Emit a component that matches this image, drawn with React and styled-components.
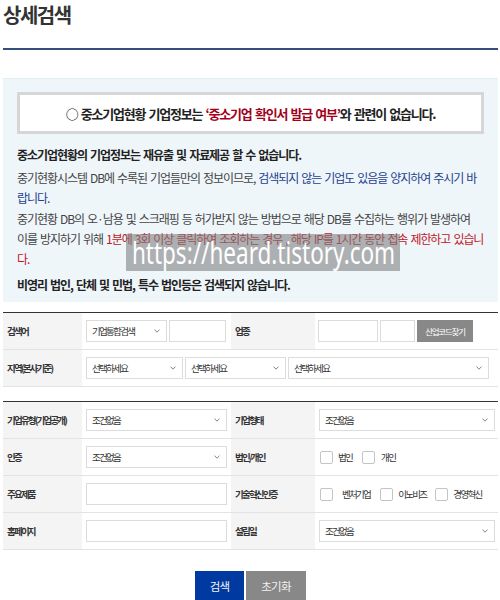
import React from "react"
import styled, { createGlobalStyle } from "styled-components"

const GlobalStyle = createGlobalStyle`
  html, body {
    margin: 0;
    padding: 0;
    background: #fff;
  }
  body {
    font-family: "Noto Sans CJK KR", "Noto Sans", sans-serif;
    color: #333;
  }
`

const Page = styled.div`
  width: 495px;
  margin-left: 3px;
`

const Title = styled.h2`
  margin: 0;
  height: 48px;
  font-size: 20px;
  font-weight: 700;
  letter-spacing: -1.5px;
  line-height: 30px;
  color: #333;
  border-bottom: 2px solid #34507a;
`

const InfoBox = styled.div`
  position: relative;
  margin-top: 28px;
  padding: 13px 14px 7px;
  background: #eff6fa;
  border-top: 1px solid #e3edf2;
`

const Notice = styled.div`
  height: 42px;
  box-sizing: border-box;
  border: 3px solid #d6d6d6;
  background: #fff;
  display: flex;
  align-items: center;
  justify-content: center;
  font-size: 13px;
  font-weight: 700;
  letter-spacing: -1.2px;
  word-spacing: 1.5px;
  color: #222;
`

const Red = styled.span`
  color: ${p => (p.dark ? "#a3001b" : "#c0161e")};
`

const Blue = styled.span`
  color: #24418f;
`

const Para = styled.p`
  margin: ${p => p.top}px 0 0;
  font-size: 12px;
  line-height: 20px;
  letter-spacing: -1.05px;
  word-spacing: 1.4px;
  white-space: nowrap;
  font-weight: ${p => (p.bold ? 700 : 400)};
  color: ${p => (p.bold ? "#222" : "#444")};
`

const Watermark = styled.div`
  position: absolute;
  left: 123px;
  top: 155px;
  width: 274px;
  height: 37px;
  background: rgba(125, 125, 125, 0.58);
  display: flex;
  align-items: center;
  justify-content: center;
  overflow: visible;
`

const WatermarkText = styled.span`
  font-family: "Noto Sans", sans-serif;
  font-size: 30px;
  color: #fff;
  white-space: nowrap;
  transform: scaleX(0.75);
`

const Grid = styled.div`
  display: grid;
  grid-template-columns: 79px 149px 84px 1fr;
  border-top: 1.5px solid #333;
  margin-top: ${p => p.gap}px;
`

const Label = styled.div`
  height: 37px;
  box-sizing: border-box;
  display: flex;
  align-items: center;
  padding-left: 4px;
  background: #f4f4f4;
  border-bottom: 1px solid #e2e2e8;
  font-size: 9.5px;
  font-weight: 700;
  letter-spacing: -1.8px;
  color: #333;
`

const Cell = styled.div`
  grid-column: span ${p => p.span || 1};
  height: 37px;
  box-sizing: border-box;
  display: flex;
  align-items: center;
  gap: ${p => p.gap ?? 2}px;
  padding-left: ${p => p.pad ?? 4}px;
  border-bottom: 1px solid #e2e2e8;
  font-size: 9.5px;
  letter-spacing: -1.7px;
  color: #333;
`

const SelectBox = styled.div`
  width: ${p => p.w}px;
  height: 22px;
  box-sizing: border-box;
  border: 1px solid #dcdcdc;
  background: #fff;
  display: flex;
  align-items: center;
  justify-content: space-between;
  padding: 0 6px 0 5px;
`

const Input = styled.div`
  width: ${p => p.w}px;
  height: 22px;
  box-sizing: border-box;
  border: 1px solid #dcdcdc;
  background: #fff;
`

const GrayButton = styled.div`
  width: 56px;
  height: 22px;
  background: #888;
  color: #fff;
  display: flex;
  align-items: center;
  justify-content: center;
  font-size: 8.5px;
  letter-spacing: -1.2px;
`

const Check = styled.span`
  width: 13px;
  height: 13px;
  box-sizing: border-box;
  border: 1px solid #c4c4c4;
  border-radius: 2px;
  background: #fff;
  margin-right: ${p => p.space}px;
`

const CheckText = styled.span`
  margin-right: ${p => p.space}px;
`

const Buttons = styled.div`
  display: flex;
  justify-content: center;
  gap: 2px;
  margin-top: 21px;
`

const Button = styled.div`
  width: ${p => p.w}px;
  height: 30px;
  background: ${p => (p.primary ? "#0039a0" : "#888")};
  color: #f2f2f2;
  display: flex;
  align-items: center;
  justify-content: center;
  font-size: 11.5px;
  letter-spacing: -0.8px;
`

const Chevron = () => (
  <svg width="6" height="4" viewBox="0 0 6 4">
    <polyline points="0.5,0.6 3,3.2 5.5,0.6" fill="none" stroke="#777" strokeWidth="0.9" />
  </svg>
)

const Select = ({ w, children }) => (
  <SelectBox w={w}>
    <span>{children}</span>
    <Chevron />
  </SelectBox>
)

const App = () => (
  <>
    <GlobalStyle />
    <Page>
      <Title>상세검색</Title>

      <InfoBox>
        <Notice>
          ○ 중소기업현황 기업정보는&nbsp;<Red dark>‘중소기업 확인서 발급 여부’</Red>와 관련이 없습니다.
        </Notice>
        <Para bold top={11}>중소기업현황의 기업정보는 재유출 및 자료제공 할 수 없습니다.</Para>
        <Para top={3}>
          중기현황시스템 DB에 수록된 기업들만의 정보이므로, <Blue>검색되지 않는 기업도 있음을 양지하여 주시기 바<br />랍니다.</Blue>
        </Para>
        <Para top={1}>
          중기현황 DB의 오·남용 및 스크래핑 등 허가받지 않는 방법으로 해당 DB를 수집하는 행위가 발생하여<br />
          이를 방지하기 위해 <Red>1분에 3회 이상 클릭하여 조회하는 경우 , 해당 IP를 1시간 동안 접속 제한하고 있습니<br />다.</Red>
        </Para>
        <Para bold top={6}>비영리 법인, 단체 및 민법, 특수 법인등은 검색되지 않습니다.</Para>
        <Watermark>
          <WatermarkText>https://heard.tistory.com</WatermarkText>
        </Watermark>
      </InfoBox>

      <Grid gap={10}>
        <Label>검색어</Label>
        <Cell>
          <Select w={81}>기업통합검색</Select>
          <Input w={57} />
        </Cell>
        <Label>업종</Label>
        <Cell pad={3}>
          <Input w={60} />
          <Input w={35} />
          <GrayButton>산업코드찾기</GrayButton>
        </Cell>

        <Label>지역(본사기준)</Label>
        <Cell span={3}>
          <Select w={97}>선택하세요</Select>
          <Select w={101}>선택하세요</Select>
          <Select w={201}>선택하세요</Select>
        </Cell>
      </Grid>

      <Grid gap={14}>
        <Label>기업유형(기업공개)</Label>
        <Cell>
          <Select w={141}>조건없음</Select>
        </Cell>
        <Label>기업형태</Label>
        <Cell>
          <Select w={176}>조건없음</Select>
        </Cell>

        <Label>인증</Label>
        <Cell>
          <Select w={141}>조건없음</Select>
        </Cell>
        <Label>법인/개인</Label>
        <Cell pad={5} gap={0}>
          <Check space={5} />
          <CheckText space={10}>법인</CheckText>
          <Check space={6} />
          <CheckText space={0}>개인</CheckText>
        </Cell>

        <Label>주요제품</Label>
        <Cell>
          <Input w={141} />
        </Cell>
        <Label>기술혁신인증</Label>
        <Cell pad={5} gap={0}>
          <Check space={9} />
          <CheckText space={10}>벤처기업</CheckText>
          <Check space={5} />
          <CheckText space={9}>이노비즈</CheckText>
          <Check space={5} />
          <CheckText space={0}>경영혁신</CheckText>
        </Cell>

        <Label>홈페이지</Label>
        <Cell>
          <Input w={141} />
        </Cell>
        <Label>설립일</Label>
        <Cell>
          <Select w={176}>조건없음</Select>
        </Cell>
      </Grid>

      <Buttons>
        <Button primary w={49}>검색</Button>
        <Button w={60}>초기화</Button>
      </Buttons>
    </Page>
  </>
)

export default App
